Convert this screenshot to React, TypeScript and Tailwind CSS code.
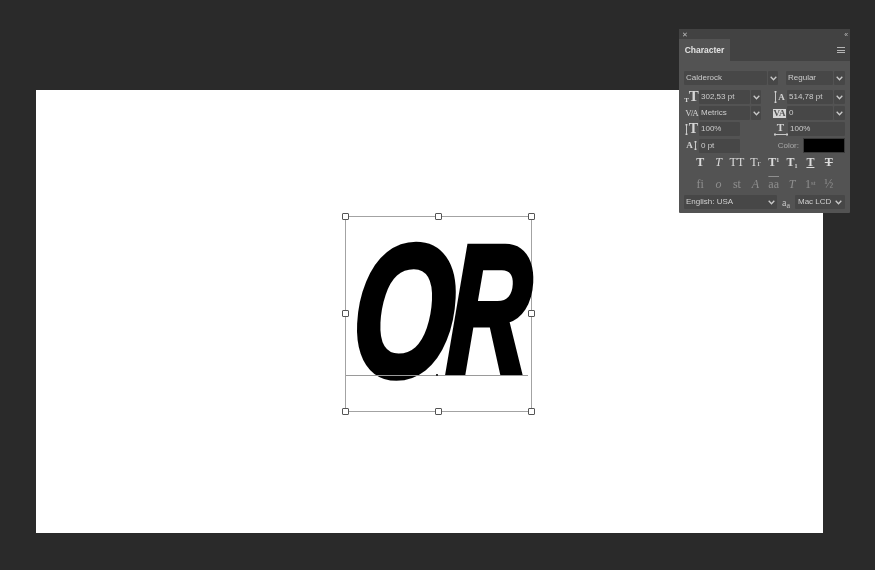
import React from "react";

const Chev = ({ className = "" }: { className?: string }) => (
  <svg width="7" height="5" viewBox="0 0 7 5" className={className} fill="none" stroke="#c9c9c9" strokeWidth="1.3">
    <path d="M0.7 0.8 L3.5 3.8 L6.3 0.8" />
  </svg>
);

const Field = ({ w, children, chev, cw = 10 }: { w: string; children: React.ReactNode; chev?: boolean; cw?: number }) => (
  <div className="flex h-[14px] shrink-0 items-stretch gap-px">
    <div className={`${w} flex items-center overflow-hidden whitespace-nowrap rounded-[1px] bg-[#474747] pl-[2px] text-[#cdcdcd]`}>{children}</div>
    {chev && (
      <div className="flex items-center justify-center rounded-[1px] bg-[#474747]" style={{ width: cw }}>
        <Chev />
      </div>
    )}
  </div>
);

const Ico = ({ children, className = "" }: { children: React.ReactNode; className?: string }) => (
  <div className={`relative flex h-[14px] w-[15px] shrink-0 items-center justify-center font-['Liberation_Serif',serif] font-bold leading-none text-[#d6d6d6] ${className}`}>{children}</div>
);

const Arrows = ({ h = 10, w = 3 }: { h?: number; w?: number }) => (
  <svg width={w} height={h} viewBox={`0 0 ${w} ${h}`} fill="none" stroke="#d6d6d6" strokeWidth="0.9">
    <path d={`M${w / 2} 0 V${h} M0 1.5 L${w / 2} 0 L${w} 1.5 M0 ${h - 1.5} L${w / 2} ${h} L${w} ${h - 1.5}`} />
  </svg>
);

const HArrow = ({ w = 14 }: { w?: number }) => (
  <svg width={w} height="3" viewBox={`0 0 ${w} 3`} fill="none" stroke="#d6d6d6" strokeWidth="0.9">
    <path d={`M0 1.5 H${w} M1.5 0 L0 1.5 L1.5 3 M${w - 1.5} 0 L${w} 1.5 L${w - 1.5} 3`} />
  </svg>
);

const Handle = ({ className }: { className: string }) => (
  <div className={`absolute h-[7px] w-[7px] rounded-[1px] border-[1.5px] border-[#555] bg-white ${className}`} />
);

export default function App() {
  return (
    <div className="relative h-[570px] w-[875px] overflow-hidden bg-[#2a2a2a] pl-[36px] pt-[90px] font-['Liberation_Sans',sans-serif]">
      <div className="h-[443px] w-[787px] bg-white" />

      {/* Transform box */}
      <div className="absolute left-[345px] top-[216px] h-[196px] w-[187px] border border-[#a3a3a3]">
        <div className="absolute left-[3px] top-[-4px] origin-bottom-left -skew-x-[4deg] scale-x-[0.695] whitespace-nowrap font-['Liberation_Sans',sans-serif] text-[182px] font-bold italic leading-[1] tracking-[-9px] text-black [-webkit-text-stroke:6px_black]">
          <span className="relative top-[4px] text-[188px]">O</span>
          <span className="inline-block origin-bottom-left scale-x-[0.9]">R</span>
        </div>
        <div className="absolute left-0 top-[158px] h-px w-[182px] bg-[#9a9a9a]" />
        <div className="absolute left-[90px] top-[157px] h-[2px] w-[2px] bg-[#333]" />
        <Handle className="-left-[4px] -top-[4px]" />
        <Handle className="left-[89px] -top-[4px]" />
        <Handle className="-right-[4px] -top-[4px]" />
        <Handle className="-left-[4px] top-[93px]" />
        <Handle className="-right-[4px] top-[93px]" />
        <Handle className="-bottom-[4px] -left-[4px]" />
        <Handle className="-bottom-[4px] left-[89px]" />
        <Handle className="-bottom-[4px] -right-[4px]" />
      </div>

      {/* Character panel */}
      <div className="absolute left-[679px] top-[29px] flex h-[184px] w-[171px] flex-col overflow-hidden rounded-[1px] bg-[#535353] text-[8px] text-[#cfcfcf] blur-[0.3px]">
        <div className="flex h-[10px] shrink-0 items-center justify-between bg-[#424242] px-[3px] text-[7px] leading-none text-[#bdbdbd]">
          <span>✕</span>
          <span className="tracking-[-1px]">‹‹</span>
        </div>
        <div className="flex h-[22px] shrink-0 bg-[#424242]">
          <div className="flex w-[51px] items-center justify-center bg-[#535353] text-[8.5px] font-bold text-[#e2e2e2]">Character</div>
          <div className="flex flex-1 items-center justify-end pr-[5px]">
            <div className="flex h-[6px] w-[8px] flex-col justify-between">
              <div className="h-px bg-[#b5b5b5]" />
              <div className="h-px bg-[#b5b5b5]" />
              <div className="h-px bg-[#b5b5b5]" />
            </div>
          </div>
        </div>

        <div className="flex flex-col px-[5px] pt-[10px]">
          <div className="flex items-center justify-between">
            <Field w="w-[83px]" chev>Calderock</Field>
            <Field w="w-[47px]" chev cw={11}>Regular</Field>
          </div>

          <div className="mt-[5px] flex items-center justify-between">
            <div className="flex items-center">
              <Ico className="items-end text-[15px]"><span className="text-[7px]">T</span><span>T</span></Ico>
              <Field w="w-[51px]" chev>302,53 pt</Field>
            </div>
            <div className="flex items-center">
              <Ico className="gap-px text-[9px]"><Arrows h={12} /><span>A</span></Ico>
              <Field w="w-[46px]" chev cw={11}>514,78 pt</Field>
            </div>
          </div>

          <div className="mt-[2px] flex items-center justify-between">
            <div className="flex items-center">
              <Ico className="font-['Liberation_Sans',sans-serif] text-[9px] font-normal tracking-[-1px]">V/A</Ico>
              <Field w="w-[51px]" chev>Metrics</Field>
            </div>
            <div className="flex items-center">
              <Ico className="text-[9px]"><span className="bg-[#d6d6d6] px-[1px] text-[#535353]">VA</span></Ico>
              <Field w="w-[46px]" chev cw={11}>0</Field>
            </div>
          </div>

          <div className="mt-[2px] flex items-center justify-between">
            <div className="flex items-center">
              <Ico className="gap-px text-[14px]"><Arrows h={11} /><span>T</span></Ico>
              <Field w="w-[41px]">100%</Field>
            </div>
            <div className="flex items-center">
              <div className="flex h-[14px] w-[15px] flex-col items-center font-['Liberation_Serif',serif] text-[11px] font-bold leading-[11px] text-[#d6d6d6]">
                <span>T</span>
                <HArrow />
              </div>
              <Field w="w-[57px]">100%</Field>
            </div>
          </div>

          <div className="mt-[2px] flex h-[15px] items-center justify-between">
            <div className="flex items-center">
              <Ico className="gap-px font-['Liberation_Sans',sans-serif] text-[9px]"><span>A</span><Arrows h={9} /></Ico>
              <Field w="w-[41px]">0 pt</Field>
            </div>
            <div className="flex items-center gap-[4px]">
              <span className="text-[#a9a9a9]">Color:</span>
              <div className="h-[15px] w-[42px] border border-[#3a3a3a] bg-black" />
            </div>
          </div>

          <div className="mt-[3px] grid h-[12px] grid-cols-8 items-center justify-items-center px-[7px] font-['Liberation_Serif',serif] text-[12px] font-bold leading-none text-[#dcdcdc]">
            <span>T</span>
            <span className="italic font-normal">T</span>
            <span className="font-normal">TT</span>
            <span className="font-normal">T<span className="text-[9px]">r</span></span>
            <span>T<span className="relative -top-[4px] text-[6px]">1</span></span>
            <span>T<span className="relative top-[2px] text-[6px]">1</span></span>
            <span className="underline">T</span>
            <span className="line-through">T</span>
          </div>

          <div className="mt-[9px] grid h-[13px] grid-cols-8 items-center justify-items-center px-[7px] font-['Liberation_Serif',serif] text-[12px] leading-none text-[#8f8f8f]">
            <span>fi</span>
            <span className="italic">o</span>
            <span>st</span>
            <span className="italic">A</span>
            <span className="overline">aa</span>
            <span className="italic">T</span>
            <span>1<span className="relative -top-[3px] text-[7px]">st</span></span>
            <span>½</span>
          </div>

          <div className="mt-[5px] flex h-[14px] items-center justify-between">
            <div className="flex h-[14px] w-[93px] items-center justify-between rounded-[1px] bg-[#474747] px-[2px]">
              <span>English: USA</span>
              <Chev />
            </div>
            <span className="font-['Liberation_Serif',serif] text-[10px] text-[#c8c8c8]">a<span className="relative top-[2px] text-[8px]">a</span></span>
            <div className="flex h-[14px] w-[50px] items-center justify-between rounded-[1px] bg-[#474747] px-[3px]">
              <span>Mac LCD</span>
              <Chev />
            </div>
          </div>
        </div>
      </div>
    </div>
  );
}
